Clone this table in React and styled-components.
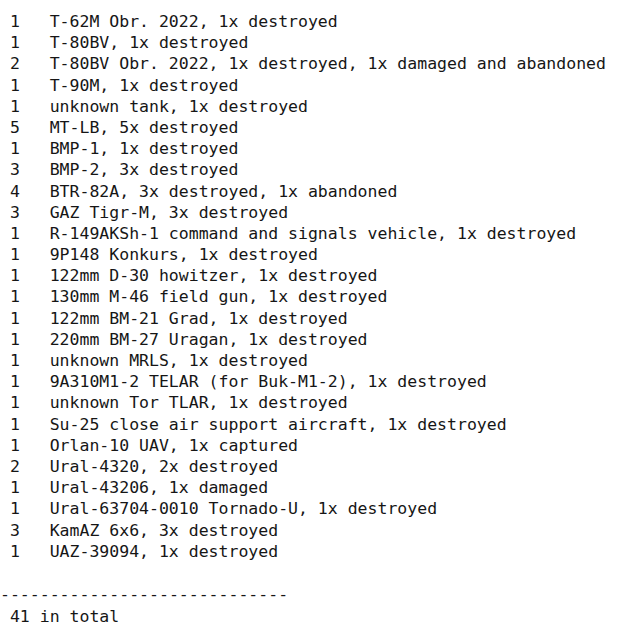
import React from 'react';
import styled, { createGlobalStyle } from 'styled-components';

const GlobalStyle = createGlobalStyle`
  html, body {
    margin: 0;
    padding: 0;
    background: #ffffff;
  }
`;

const Sheet = styled.div`
  padding-top: 11px;
  font-family: "DejaVu Sans Mono", "Liberation Mono", monospace;
  font-size: 16.5px;
  line-height: 21.2px;
  color: #161616;
  white-space: pre;
`;

const Row = styled.div`
  display: grid;
  grid-template-columns: 5ch 1fr;
  height: 21.2px;
`;

const Count = styled.span`
  padding-left: 1ch;
`;

const Item = styled.span``;

const Spacer = styled.div`
  height: 22px;
`;

const Divider = styled.div`
  height: 22px;
`;

const Total = styled.div`
  height: 21.2px;
  padding-left: 1ch;
`;

const losses = [
  [1, 'T-62M Obr. 2022, 1x destroyed'],
  [1, 'T-80BV, 1x destroyed'],
  [2, 'T-80BV Obr. 2022, 1x destroyed, 1x damaged and abandoned'],
  [1, 'T-90M, 1x destroyed'],
  [1, 'unknown tank, 1x destroyed'],
  [5, 'MT-LB, 5x destroyed'],
  [1, 'BMP-1, 1x destroyed'],
  [3, 'BMP-2, 3x destroyed'],
  [4, 'BTR-82A, 3x destroyed, 1x abandoned'],
  [3, 'GAZ Tigr-M, 3x destroyed'],
  [1, 'R-149AKSh-1 command and signals vehicle, 1x destroyed'],
  [1, '9P148 Konkurs, 1x destroyed'],
  [1, '122mm D-30 howitzer, 1x destroyed'],
  [1, '130mm M-46 field gun, 1x destroyed'],
  [1, '122mm BM-21 Grad, 1x destroyed'],
  [1, '220mm BM-27 Uragan, 1x destroyed'],
  [1, 'unknown MRLS, 1x destroyed'],
  [1, '9A310M1-2 TELAR (for Buk-M1-2), 1x destroyed'],
  [1, 'unknown Tor TLAR, 1x destroyed'],
  [1, 'Su-25 close air support aircraft, 1x destroyed'],
  [1, 'Orlan-10 UAV, 1x captured'],
  [2, 'Ural-4320, 2x destroyed'],
  [1, 'Ural-43206, 1x damaged'],
  [1, 'Ural-63704-0010 Tornado-U, 1x destroyed'],
  [3, 'KamAZ 6x6, 3x destroyed'],
  [1, 'UAZ-39094, 1x destroyed'],
];

const App = () => {
  const total = losses.reduce((sum, [n]) => sum + n, 0);

  return (
    <>
      <GlobalStyle />
      <Sheet>
        {losses.map(([count, label], i) => (
          <Row key={i}>
            <Count>{count}</Count>
            <Item>{label}</Item>
          </Row>
        ))}
        <Spacer />
        <Divider>{'-'.repeat(29)}</Divider>
        <Total>{total} in total</Total>
      </Sheet>
    </>
  );
};

export default App;
